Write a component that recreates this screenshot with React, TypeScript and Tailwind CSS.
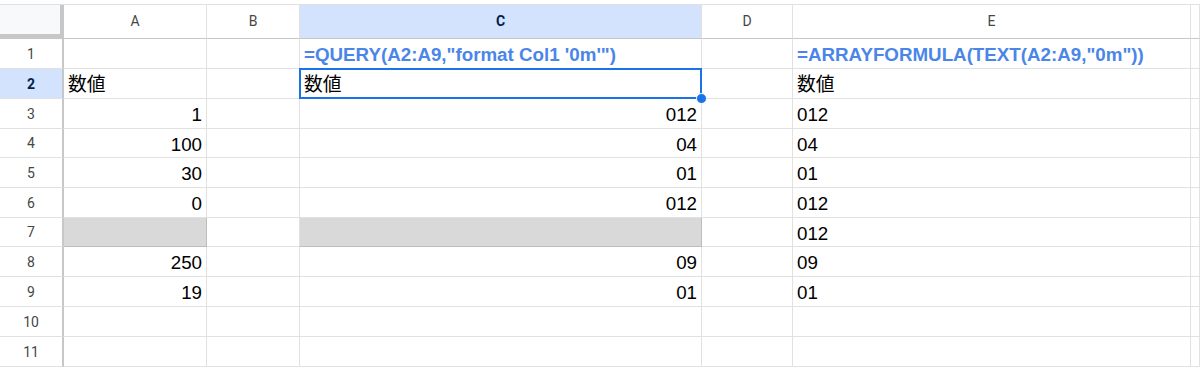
import React from 'react';

const font = { fontFamily: '"Liberation Sans", "Noto Sans CJK JP", Arial, sans-serif' };

type Col = { key: string; width: string };

const columns: Col[] = [
  { key: 'A', width: 'w-[143px]' },
  { key: 'B', width: 'w-[93px]' },
  { key: 'C', width: 'w-[402px]' },
  { key: 'D', width: 'w-[91px]' },
  { key: 'E', width: 'w-[398px]' },
  { key: '', width: 'w-[9px]' },
];

type Cell = { text?: string; align?: 'left' | 'right'; formula?: boolean; grey?: boolean };

const rows: Cell[][] = [
  [{}, {}, { text: `=QUERY(A2:A9,"format Col1 '0m'")`, formula: true }, {}, { text: '=ARRAYFORMULA(TEXT(A2:A9,"0m"))', formula: true }, {}],
  [{ text: '数値' }, {}, { text: '数値' }, {}, { text: '数値' }, {}],
  [{ text: '1', align: 'right' }, {}, { text: '012', align: 'right' }, {}, { text: '012' }, {}],
  [{ text: '100', align: 'right' }, {}, { text: '04', align: 'right' }, {}, { text: '04' }, {}],
  [{ text: '30', align: 'right' }, {}, { text: '01', align: 'right' }, {}, { text: '01' }, {}],
  [{ text: '0', align: 'right' }, {}, { text: '012', align: 'right' }, {}, { text: '012' }, {}],
  [{ grey: true }, {}, { grey: true }, {}, { text: '012' }, {}],
  [{ text: '250', align: 'right' }, {}, { text: '09', align: 'right' }, {}, { text: '09' }, {}],
  [{ text: '19', align: 'right' }, {}, { text: '01', align: 'right' }, {}, { text: '01' }, {}],
  [{}, {}, {}, {}, {}, {}],
  [{}, {}, {}, {}, {}, {}],
];

// the screenshot was scaled a little, so a few rows come out a pixel shorter
const rowHeights = ['h-[30px]', 'h-[30px]', 'h-[30px]', 'h-[29px]', 'h-[30px]', 'h-[30px]', 'h-[29px]', 'h-[30px]', 'h-[30px]', 'h-[30px]', 'h-[30px]'];

export default function App() {
  return (
    <div className="h-[372px] w-[1200px] overflow-hidden bg-white" style={font}>
      <div className="h-[5px] border-b border-[#e1e1e1] bg-white" />

      {/* column headers */}
      <div className="flex h-[34px]">
        <div className="h-[34px] w-[64px] shrink-0 border-r-4 border-b-[5px] border-[#c7c7c7] bg-[#f8f9fa]" />
        {columns.map((col) => {
          const active = col.key === 'C';
          return (
            <div
              key={col.key || 'rest'}
              className={`flex shrink-0 items-center justify-center border-r border-b border-r-[#e1e1e1] border-b-[#c7c7c7] text-[14px] ${col.width} ${
                active ? 'bg-[#d3e3fd] font-bold text-[#041e49]' : 'text-[#444746]'
              }`}
              style={{ fontFamily: 'Roboto, Arial, sans-serif' }}
            >
              {col.key}
            </div>
          );
        })}
      </div>

      {rows.map((row, i) => {
        const rowActive = i === 1;
        return (
          <div key={i} className={`flex ${rowHeights[i]}`}>
            <div
              className={`flex w-[64px] shrink-0 items-center justify-center border-r-2 border-b border-r-[#c7c7c7] border-b-[#e1e1e1] pt-[1px] text-[14px] ${
                rowActive ? 'bg-[#d3e3fd] font-bold text-[#041e49]' : 'text-[#444746]'
              }`}
              style={{ fontFamily: 'Roboto, Arial, sans-serif' }}
            >
              {i + 1}
            </div>
            {row.map((cell, j) => {
              const selected = i === 1 && j === 2;
              return (
                <div
                  key={j}
                  className={`relative flex shrink-0 items-center border-r border-b px-[4px] text-[18.75px] leading-none ${columns[j].width} ${
                    cell.align === 'right' ? 'justify-end' : 'justify-start'
                  } ${cell.grey ? 'border-[#bdbdbd] bg-[#d9d9d9]' : 'border-[#e1e1e1]'} ${
                    cell.formula ? 'font-bold text-[#4a86e8]' : 'text-black'
                  }`}
                >
                  <span className="whitespace-nowrap pt-[4px]">{cell.text}</span>
                  {selected ? (
                    <>
                      <div className="pointer-events-none absolute -top-px -left-px h-[31px] w-[403px] border-2 border-[#1a73e8]" />
                      <div className="absolute -right-[6px] -bottom-[6px] z-10 h-[11px] w-[11px] rounded-full border border-white bg-[#1a73e8]" />
                    </>
                  ) : null}
                </div>
              );
            })}
          </div>
        );
      })}
    </div>
  );
}
